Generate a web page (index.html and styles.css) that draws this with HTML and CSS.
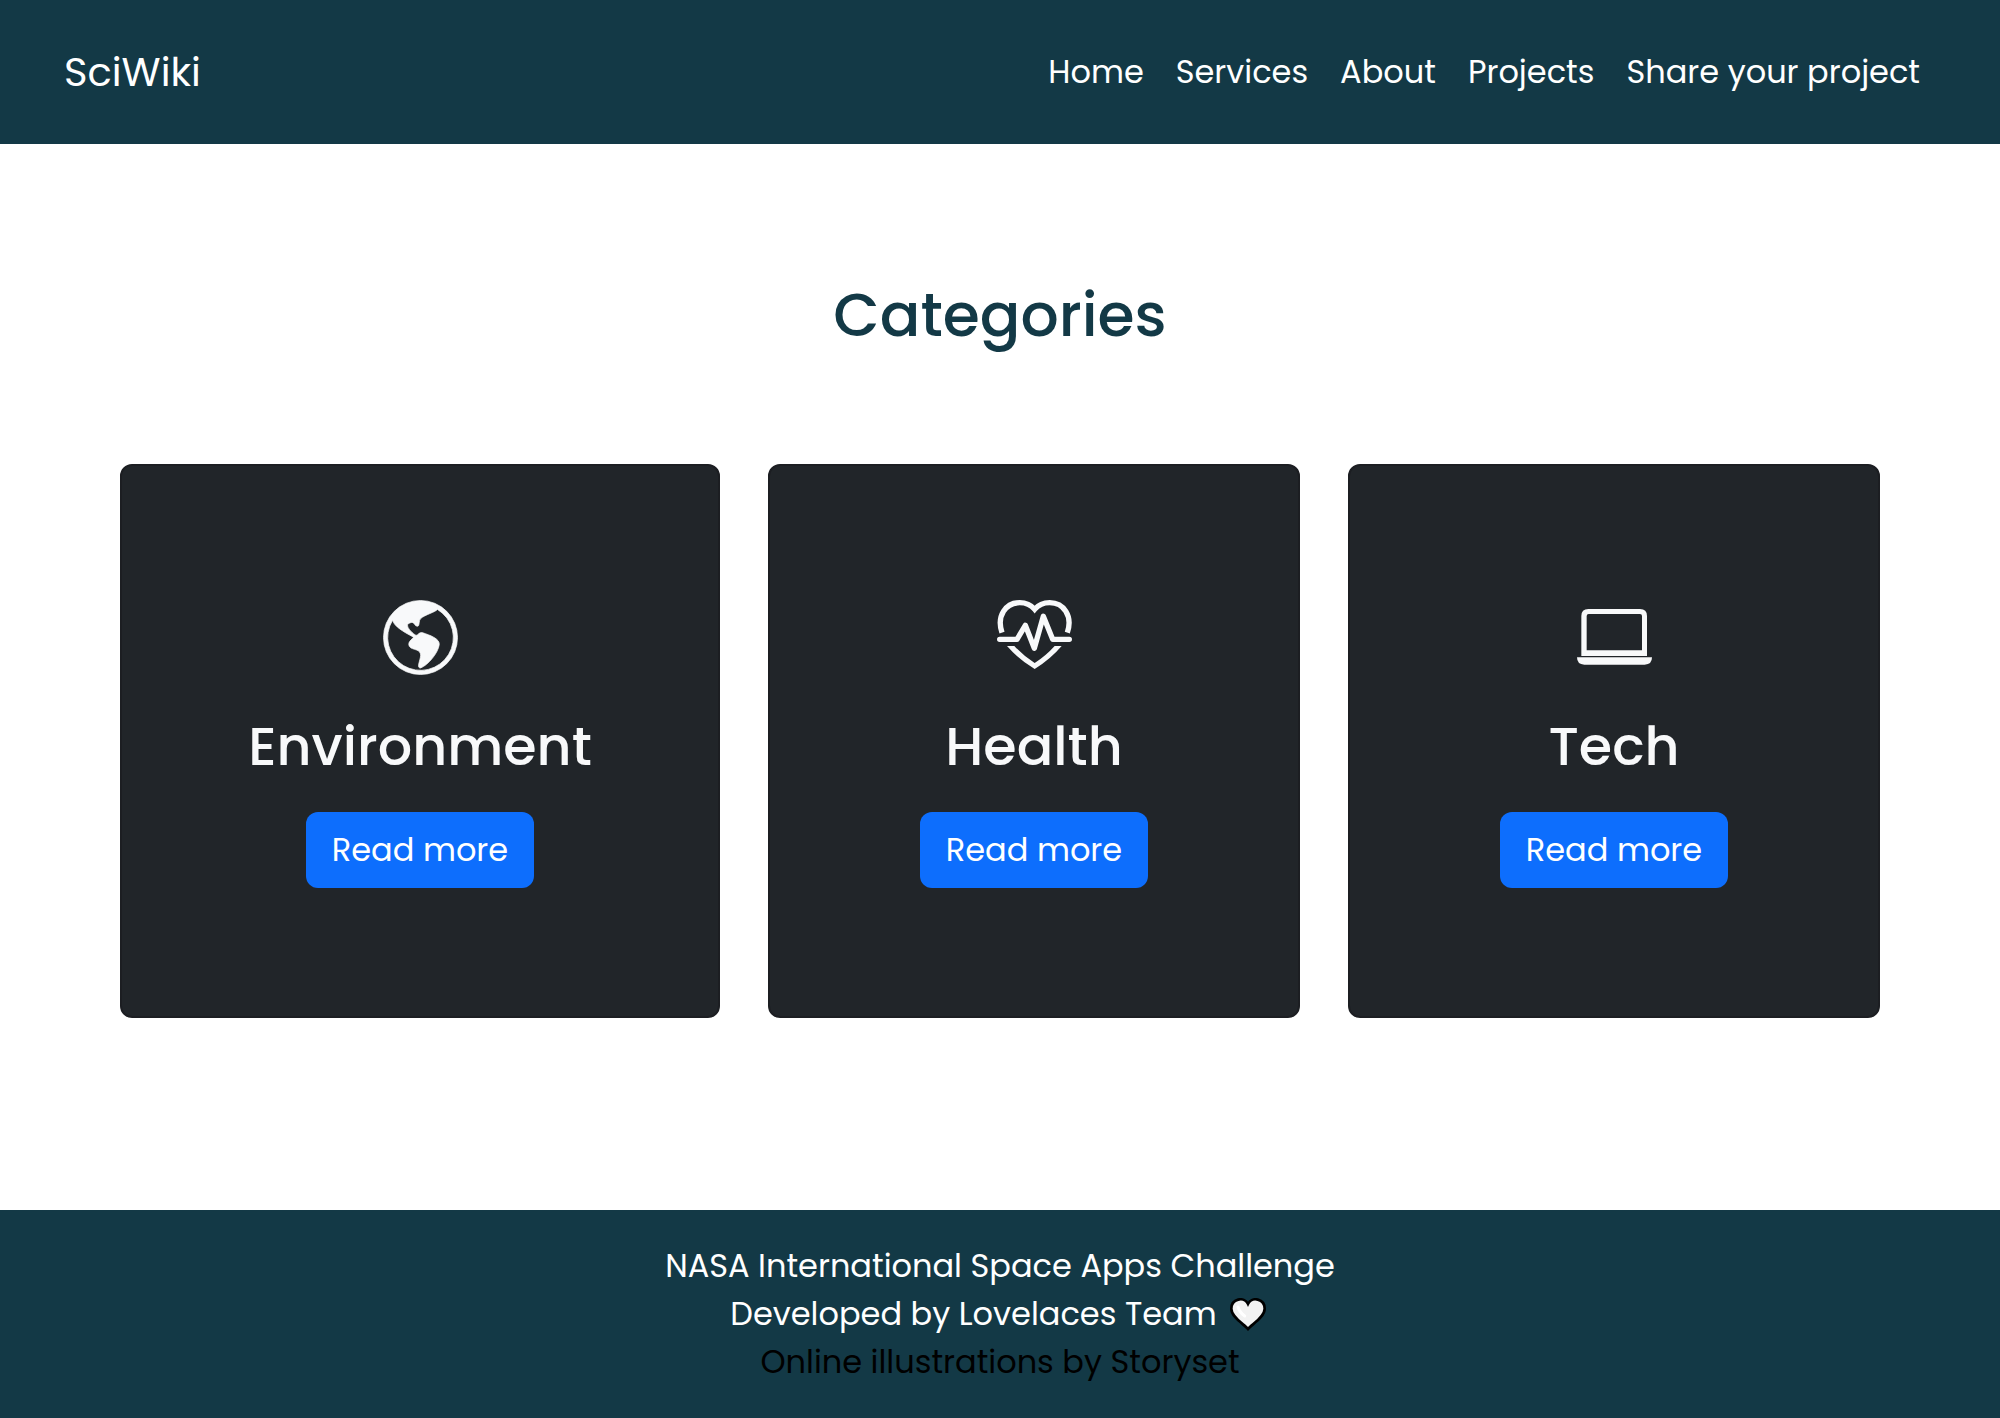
FILE: index.html
```html
<!DOCTYPE html>
<html lang="en">
<head>
<meta charset="utf-8">
<meta name="viewport" content="width=device-width, initial-scale=1">
<title>SciWiki</title>
<link rel="stylesheet" href="styles.css">
</head>
<body>
<header class="navbar">
  <a class="brand" href="#">SciWiki</a>
  <nav class="nav-links">
    <a href="#">Home</a>
    <a href="#">Services</a>
    <a href="#">About</a>
    <a href="#">Projects</a>
    <a href="#">Share your project</a>
  </nav>
</header>
<main class="categories">
  <h1 class="title">Categories</h1>
  <div class="cards">
    <section class="card">
      <svg class="icon" viewBox="0 0 16 16" fill="currentColor" stroke="currentColor" aria-hidden="true"><path stroke-width=".15" d="M8 .1a7.900 7.900 0 1 0 0 15.800A7.900 7.900 0 0 0 8 .1ZM2.040 4.326c.325 1.329 2.532 2.540 3.717 3.190.48.263.793.434.743.484-.08.08-.162.158-.242.234-.416.396-.787.749-.758 1.266.035.634.618.824 1.214 1.017.577.188 1.168.38 1.286.983.082.417-.075.988-.22 1.520-.215.782-.406 1.480.22 1.480 1.500-.5 3.798-3.186 4-5 .138-1.243-2-2-3.500-2.500-.478-.16-.755.081-.99.284-.172.15-.322.279-.51.216-.445-.148-2.500-2-1.500-2.500.78-.39.952-.171 1.227.182.078.099.163.208.273.318.609.304.662-.132.723-.633.039-.322.081-.671.277-.867.434-.434 1.265-.791 2.028-1.120.712-.306 1.365-.587 1.579-.88A7 7 0 1 1 2.040 4.327Z"/></svg>
      <h2 class="card-title">Environment</h2>
      <button class="btn" type="button">Read more</button>
    </section>
    <section class="card">
      <svg class="icon" viewBox="82 60 225 225" aria-hidden="true">
        <g fill="none" stroke="currentColor" stroke-width="16">
          <path d="M97 158C80 108 108 68 150 68C168 68 184 75 195 88C206 75 222 68 240 68C282 68 310 108 293 158"/>
          <path d="M90 178H142L167 136L194 205L221 109L249 178H299" stroke-linecap="round" stroke-linejoin="round"/>
        </g>
        <path fill="currentColor" d="M112 198H134Q162 228 195 249Q228 228 255 198H276Q243 237 195 267Q146 237 112 198Z"/>
      </svg>
      <h2 class="card-title">Health</h2>
      <button class="btn" type="button">Read more</button>
    </section>
    <section class="card">
      <svg class="icon" viewBox="81 60 225 225" fill="currentColor" aria-hidden="true">
        <path fill-rule="evenodd" d="M94 228V108Q94 87 115 87H270Q291 87 291 108V228ZM110 211H276V108Q276 102 270 102H116Q110 102 110 108Z"/>
        <path d="M81 232H306Q306 254 284 254H103Q81 254 81 232Z"/>
      </svg>
      <h2 class="card-title">Tech</h2>
      <button class="btn" type="button">Read more</button>
    </section>
  </div>
</main>
<footer class="footer">
  <p>NASA International Space Apps Challenge</p>
  <p class="team">Developed by Lovelaces Team
    <svg class="heart" viewBox="0 0 108 99" role="img" aria-label="love"><path d="M54 93C44 80 4 58 4 32C4 2 42-6 54 18C66-6 104 2 104 32C104 58 64 80 54 93Z" fill="#f2f2f2" stroke="#000" stroke-width="8"/><path d="M24 27Q29 43 44 54" fill="none" stroke="#fff" stroke-width="9" stroke-linecap="round"/></svg>
  </p>
  <p><a class="credit" href="#">Online illustrations by Storyset</a></p>
</footer>
</body>
</html>
```
FILE: styles.css
```css
* {
  box-sizing: border-box;
}

body {
  margin: 0;
  background: #fff;
  color: #fff;
  font-family: Poppins, Inter, sans-serif;
  font-size: 32px;
  line-height: 48px;
}

h1,
h2,
p {
  margin: 0;
}

a {
  color: inherit;
  text-decoration: none;
}

.navbar {
  display: flex;
  align-items: center;
  justify-content: space-between;
  padding: 42px 64px;
  background: #133946;
}

.brand {
  font-size: 40px;
  line-height: 60px;
}

.nav-links {
  display: flex;
}

.nav-links a {
  padding: 0 16px;
}

.categories {
  padding: 135px 120px 192px;
}

.title {
  margin-bottom: 113px;
  color: #133946;
  font-size: 60px;
  font-weight: 500;
  line-height: 72px;
  text-align: center;
}

.cards {
  display: grid;
  grid-template-columns: 600fr 532fr 532fr;
  gap: 48px;
}

.card {
  display: flex;
  flex-direction: column;
  align-items: center;
  padding: 134px 24px 128px;
  border: 2px solid #1c1e22;
  border-radius: 12px;
  background: #212529;
  color: #f8f9fa;
}

.icon {
  width: 75px;
  height: 75px;
}

.card-title {
  margin: 39px 0 33px;
  font-size: 54px;
  font-weight: 500;
  line-height: 65px;
}

.btn {
  padding: 14px 26px;
  border: 0;
  border-radius: 12px;
  background: #0d6efd;
  color: #fff;
  font: inherit;
}

.footer {
  padding: 32px;
  background: #133946;
  text-align: center;
}

.team {
  display: flex;
  align-items: center;
  justify-content: center;
  gap: 13px;
}

.heart {
  width: 36px;
  height: 33px;
  margin-right: 4px;
}

.credit {
  color: #000;
}
```
